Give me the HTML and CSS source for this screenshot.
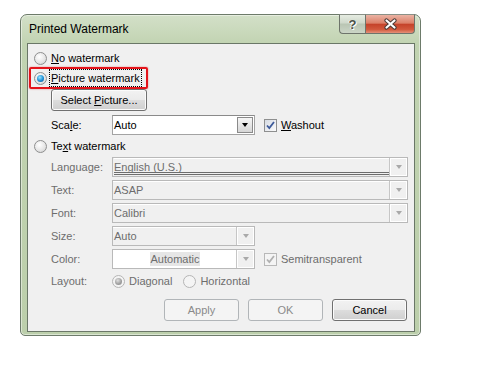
FILE: index.html
```html
<!DOCTYPE html>
<html lang="en">
<head>
    <meta charset="UTF-8">
    <title>Printed Watermark</title>
    <link rel="stylesheet" href="styles.css">
</head>
<body>
    <div class="window">
        <div class="titlebar">
            <span class="title">Printed Watermark</span>
            <div class="caption">
                <span class="cap-btn help">?</span>
                <span class="cap-btn close">
                    <svg width="15" height="12" viewBox="0 0 15 12">
                        <path d="M3.5 2.5 L11.5 9.5 M11.5 2.5 L3.5 9.5" stroke="#4a3a36" stroke-width="4.2" stroke-linecap="round"/>
                        <path d="M3.5 2.5 L11.5 9.5 M11.5 2.5 L3.5 9.5" stroke="#fff" stroke-width="2.2" stroke-linecap="round"/>
                    </svg>
                </span>
            </div>
        </div>
        <div class="client">
            <div class="opt opt-none"><span class="radio"></span><span class="opt-text"><u>N</u>o watermark</span></div>
            <div class="picked"><span class="radio on"></span><span class="opt-text focus"><u>P</u>icture watermark</span></div>
            <div class="row-select"><button class="btn select">Select <u>P</u>icture...</button></div>
            <div class="field-row scale">
                <span class="field-label">Sca<u>l</u>e:</span>
                <div class="combo short"><span class="combo-text">Auto</span><span class="drop"><i class="arrow"></i></span></div>
                <span class="check"><svg width="11" height="11" viewBox="0 0 11 11"><path d="M2 5.5 L4.3 8 L9 2" fill="none" stroke="#3d5a9a" stroke-width="1.8"/></svg></span>
                <span class="check-text"><u>W</u>ashout</span>
            </div>
            <div class="opt opt-text-wm"><span class="radio"></span><span class="opt-text">Te<u>x</u>t watermark</span></div>
            <div class="field-row off">
                <span class="field-label">Language:</span>
                <div class="combo wide"><span class="combo-text lined">English (U.S.)</span><span class="drop"><i class="arrow"></i></span></div>
            </div>
            <div class="field-row off">
                <span class="field-label">Text:</span>
                <div class="combo wide"><span class="combo-text">ASAP</span><span class="drop"><i class="arrow"></i></span></div>
            </div>
            <div class="field-row off">
                <span class="field-label">Font:</span>
                <div class="combo wide"><span class="combo-text">Calibri</span><span class="drop"><i class="arrow"></i></span></div>
            </div>
            <div class="field-row off">
                <span class="field-label">Size:</span>
                <div class="combo short"><span class="combo-text">Auto</span><span class="drop"><i class="arrow"></i></span></div>
            </div>
            <div class="field-row off">
                <span class="field-label">Color:</span>
                <div class="combo short white"><span class="combo-text center"><span class="sel">Automatic</span></span><span class="drop"><i class="arrow"></i></span></div>
                <span class="check"><svg width="11" height="11" viewBox="0 0 11 11"><path d="M2 5.5 L4.3 8 L9 2" fill="none" stroke="#b0b0b0" stroke-width="1.8"/></svg></span>
                <span class="check-text">Semitransparent</span>
            </div>
            <div class="field-row off layout">
                <span class="field-label">Layout:</span>
                <span class="radio on"></span><span class="opt-text diag">Diagonal</span>
                <span class="radio"></span><span class="opt-text">Horizontal</span>
            </div>
            <div class="actions">
                <button class="btn" disabled>Apply</button>
                <button class="btn" disabled>OK</button>
                <button class="btn">Cancel</button>
            </div>
        </div>
    </div>
</body>
</html>
```

FILE: styles.css
```css
* { margin: 0; padding: 0; box-sizing: border-box; }
body { background: #fff; font-family: "Liberation Sans", Arial, sans-serif; font-size: 11px; color: #000; }

/* Window frame */
.window { margin: 14px 0 0 20px; width: 401px; height: 322px; border: 1px solid #6d7b6a; border-radius: 7px 7px 5px 5px; background: linear-gradient(#d3e0c8, #c1d3b1 30px, #bccfab); box-shadow: inset 0 0 0 1px rgba(255, 255, 255, 0.45); padding: 0 5px 3px 6px; display: flex; flex-direction: column; }
.titlebar { height: 28px; flex: none; display: flex; align-items: center; justify-content: space-between; padding-left: 2px; }
.title { font-size: 12px; color: #000; }
.caption { align-self: flex-start; margin-top: -1px; display: flex; }
.cap-btn { height: 20px; display: flex; align-items: center; justify-content: center; border: 1px solid #6e746b; border-top-color: #8a9187; }
.help { width: 26px; border-radius: 0 0 0 4px; border-right: none; background: linear-gradient(#e6ece2, #cfd8ca 45%, #b9c5b3 50%, #cbd5c6); font-weight: bold; font-size: 13px; color: #4a5148; text-shadow: 1px 1px 0 #fff, -1px 0 0 #f4f4f4; }
.close { width: 50px; border-radius: 0 0 4px 0; background: linear-gradient(#eab3a4, #dc8068 45%, #c5432a 52%, #d2583c 80%, #e49079); }

/* Client area */
.client { height: 289px; flex: none; border: 1px solid #6a7767; background: #f0f0f0; padding: 0 6px; }
.opt { display: flex; align-items: center; height: 16px; }
.opt-none { margin-top: 6px; }
.opt-text-wm { margin-top: 3px; }
.opt-text { margin-left: 4px; line-height: 16px; }
.picked { margin: 1px 0 0 -5px; width: 119px; height: 22px; border: 2px solid #e4141b; border-radius: 2px; box-shadow: 0 0 2px rgba(210, 0, 0, 0.45); padding-left: 3px; display: flex; align-items: center; }
.focus { outline: 1px dotted #000; margin-left: 3px; padding: 0 1px; }
.row-select { padding-left: 17px; height: 22px; }
.field-row { display: flex; align-items: center; height: 20px; margin-top: 3px; padding-left: 17px; }
.field-row.scale { margin-top: 4px; }
.field-row.layout { margin-top: 4px; height: 16px; }
.field-label { width: 61px; flex: none; }
.off .field-label, .off .combo-text, .off .opt-text, .off .check-text { color: #6d6d6d; }

/* Radios and checkboxes */
.radio { position: relative; width: 13px; height: 13px; flex: none; border-radius: 50%; border: 1px solid #8e8f8f; background: radial-gradient(circle at 40% 35%, #fff, #e4e4e4 60%, #c9c9c9); }
.radio.on::after { content: ""; position: absolute; left: 2px; top: 2px; width: 7px; height: 7px; border-radius: 50%; background: radial-gradient(circle at 40% 35%, #9be6ff, #1b8fd6 55%, #0a4a85); }
.off .radio { border-color: #b5b5b5; background: #f4f4f4; }
.off .radio.on::after { background: radial-gradient(circle at 40% 35%, #e0e0e0, #9c9c9c 60%, #8a8a8a); }
.diag { margin-right: 11px; }
.check { width: 13px; height: 13px; flex: none; margin-left: 9px; border: 1px solid #8e8f8f; background: linear-gradient(135deg, #d6dbe3, #fbfbfb); display: flex; align-items: center; justify-content: center; }
.off .check { border-color: #b8b8b8; background: #f4f4f4; }
.check-text { margin-left: 4px; }

/* Combo boxes */
.combo { display: flex; height: 20px; padding: 1px; border: 1px solid #a3a3a3; border-top-color: #8a8a8a; background: #fff; }
.combo.short { width: 143px; flex: none; }
.combo.wide { flex: 1; }
.combo-text { flex: 1; line-height: 16px; padding-left: 0; white-space: nowrap; }
.combo-text.center { text-align: center; }
.sel { background: #e6e6e6; padding: 1px 1px; }
.drop { width: 16px; flex: none; display: flex; align-items: center; justify-content: center; border: 1px solid #8a8a8a; background: linear-gradient(#f6f6f6, #d6d6d6); }
.arrow { width: 0; height: 0; border-left: 3.5px solid transparent; border-right: 3.5px solid transparent; border-top: 4px solid #000; }
.off .combo { background: #f0f0f0; border-color: #b9b9b9; padding: 0; }
.off .combo.white { background: #fff; }
.off .combo-text { box-shadow: inset 0 1px 0 #fff; padding: 1px 0 0 1px; }
.combo-text.lined { border-bottom: 3px double #6d6d6d; margin: 0 0 1px 1px; padding-left: 0; }
.off .drop { width: 18px; border: 1px solid #c6c6c6; border-width: 0 0 0 1px; background: #f0f0f0; box-shadow: inset 0 0 0 1px #fff; }
.off .arrow { border-top-color: #a9a9a9; }

/* Buttons */
.btn { height: 22px; border: 1px solid #707070; border-radius: 3px; background: linear-gradient(#f2f2f2 0%, #ebebeb 50%, #dddddd 51%, #cfcfcf 100%); box-shadow: inset 0 0 0 1px #fbfbfb; font-family: "Liberation Sans", Arial, sans-serif; font-size: 11px; color: #000; }
.btn.select { width: 96px; }
.btn:disabled { border-color: #b1b5b8; background: #f4f4f4; color: #8a8a8a; box-shadow: none; }
.actions { display: flex; justify-content: flex-end; gap: 9px; margin: 10px 1px 0 0; }
.actions .btn { width: 75px; }
```
